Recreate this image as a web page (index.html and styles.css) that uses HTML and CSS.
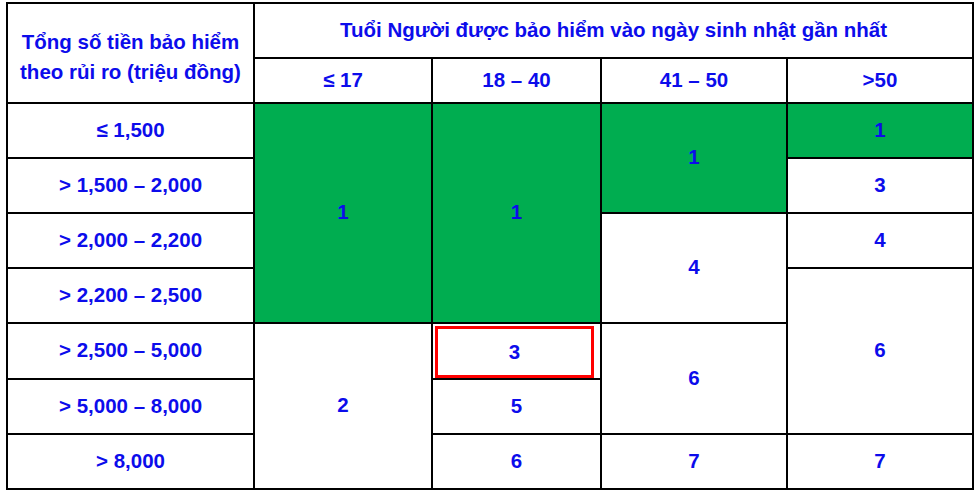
FILE: index.html
```html
<!DOCTYPE html>
<html lang="vi">
<head>
<meta charset="utf-8">
<title>Bảng</title>
<link rel="stylesheet" href="styles.css">
</head>
<body>
<div class="wrap">
<table class="grid">
  <colgroup>
    <col class="c0"><col class="c1"><col class="c2"><col class="c3"><col class="c4">
  </colgroup>
  <tr class="h1">
    <th rowspan="2" class="corner">Tổng số tiền bảo hiểm<br>theo rủi ro (triệu đồng)</th>
    <th colspan="4">Tuổi Người được bảo hiểm vào ngày sinh nhật gần nhất</th>
  </tr>
  <tr class="h2">
    <th>≤ 17</th><th>18 – 40</th><th>41 – 50</th><th>&gt;50</th>
  </tr>
  <tr>
    <td>≤ 1,500</td>
    <td rowspan="4" class="g">1</td>
    <td rowspan="4" class="g">1</td>
    <td rowspan="2" class="g">1</td>
    <td class="g">1</td>
  </tr>
  <tr>
    <td>&gt; 1,500 – 2,000</td>
    <td>3</td>
  </tr>
  <tr>
    <td>&gt; 2,000 – 2,200</td>
    <td rowspan="2">4</td>
    <td>4</td>
  </tr>
  <tr>
    <td>&gt; 2,200 – 2,500</td>
    <td rowspan="3">6</td>
  </tr>
  <tr>
    <td>&gt; 2,500 – 5,000</td>
    <td rowspan="3">2</td>
    <td class="hl"><div class="mark">3</div></td>
    <td rowspan="2">6</td>
  </tr>
  <tr>
    <td>&gt; 5,000 – 8,000</td>
    <td>5</td>
  </tr>
  <tr>
    <td>&gt; 8,000</td>
    <td>6</td>
    <td>7</td>
    <td>7</td>
  </tr>
</table>
</div>
</body>
</html>
```
FILE: styles.css
```css
html, body {
  margin: 0;
  padding: 0;
  background: #ffffff;
}
.wrap {
  padding: 2px 0 0 6px;
}
.grid {
  border-collapse: collapse;
  table-layout: fixed;
  width: 966px;
  font-family: "Liberation Sans", Arial, sans-serif;
  font-weight: bold;
  font-size: 20.5px;
  color: #0c0ceb;
}
.c0 { width: 247px; }
.c1 { width: 178px; }
.c2 { width: 169px; }
.c3 { width: 186px; }
.c4 { width: 186px; }
.grid th, .grid td {
  border: 2px solid #000;
  text-align: center;
  vertical-align: middle;
  padding: 0 0 2px 0;
  font-weight: bold;
  height: 51px;
  line-height: 24px;
}
.grid .h1 th { height: 51px; }
.grid .h2 th { height: 41px; }
.grid .corner { line-height: 30px; padding: 8px 0 0 0; }
.grid .g { background: #00ad50; }
.grid .hl { padding: 2px 6px 0 2px; }
.mark {
  border: 3px solid #ff0000;
  height: 46px;
  line-height: 46px;
}
```
